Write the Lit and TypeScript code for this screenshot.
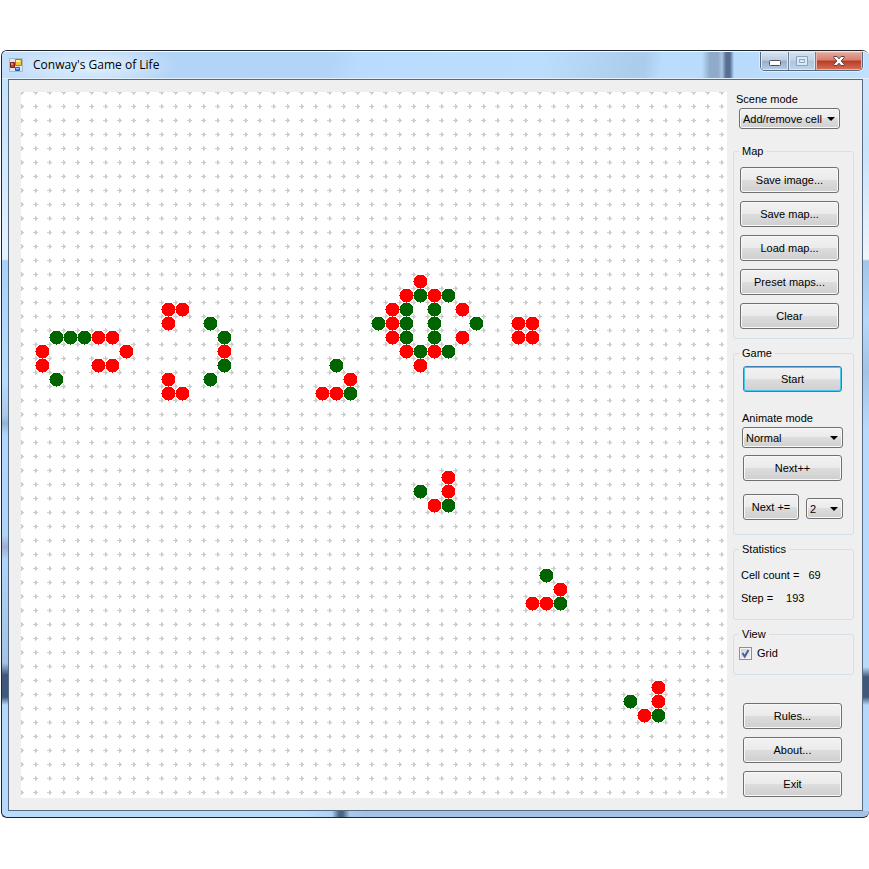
import { LitElement, html, css, svg } from "lit";
import { customElement, property, state } from "lit/decorators.js";

const CELL = 14;
const SIZE = 706;

// Live cells by row: [row, red columns, green columns]
const CELLS: [number, number[], number[]][] = [
  [13, [28], []],
  [14, [27, 29], [28, 30]],
  [15, [10, 11, 26, 31], [27, 29]],
  [16, [10, 26, 35, 36], [13, 25, 27, 29, 32]],
  [17, [5, 6, 26, 31, 35, 36], [2, 3, 4, 14, 27, 29]],
  [18, [1, 7, 14, 27, 29], [28, 30]],
  [19, [1, 5, 6, 28], [14, 22]],
  [20, [10, 23], [2, 13]],
  [21, [10, 11, 21, 22], [23]],
  [27, [30], []],
  [28, [30], [28]],
  [29, [29], [30]],
  [34, [], [37]],
  [35, [38], []],
  [36, [36, 37], [38]],
  [42, [45], []],
  [43, [45], [43]],
  [44, [44], [45]],
];

@customElement("life-board")
export class LifeBoard extends LitElement {
  @property({ type: Boolean }) grid = true;

  static styles = css`
    :host {
      display: block;
      flex: 1;
      min-width: 0;
      background: #fff;
    }
    .board {
      display: block;
      width: 100%;
    }
    .mark {
      fill: #cdcdcd;
      shape-rendering: crispEdges;
    }
    .born {
      fill: #f00;
      shape-rendering: crispEdges;
    }
    .old {
      fill: #006400;
      shape-rendering: crispEdges;
    }
  `;

  private cell(row: number, col: number, cls: string) {
    return svg`<circle class=${cls} cx=${CELL * col + 7.5} cy=${CELL * row + 7.5} r="7"></circle>`;
  }

  render() {
    return html`<svg class="board" viewBox="0 0 ${SIZE} ${SIZE}" role="img" aria-label="Cells">
      <defs>
        <pattern id="marks" x="-7" y="-7" width=${CELL} height=${CELL} patternUnits="userSpaceOnUse">
          <path class="mark" d="M5 7h5v1h-5zM7 5h1v5h-1zM8 6h1v3h-1z"></path>
        </pattern>
      </defs>
      ${this.grid ? svg`<rect width=${SIZE} height=${SIZE} fill="url(#marks)"></rect>` : null}
      ${CELLS.map(([row, red, green]) => [
        ...red.map((c) => this.cell(row, c, "born")),
        ...green.map((c) => this.cell(row, c, "old")),
      ])}
    </svg>`;
  }
}

@customElement("app-root")
export class AppRoot extends LitElement {
  @state() private grid = true;

  static styles = css`
    :host {
      display: block;
      min-height: 100vh;
      box-sizing: border-box;
      padding: 50px 0 50px 1px;
      background: #fff;
      color: #000;
      font: 11px/14px "Liberation Sans", Arial, sans-serif;
    }
    * {
      box-sizing: border-box;
    }
    .window {
      border: 1px solid #20242c;
      border-right: 0;
      border-radius: 6px 7px 6px 6px;
      padding: 0 6px 6px;
      background:
        linear-gradient(90deg, transparent, #4c6485 40%, #4c6485 60%, transparent) 330px 100% / 18px 6px no-repeat,
        linear-gradient(90deg, #b9dcfd 0, #b9dcfd 35%, #a3c3e6 42%, #a3c3e6) 0 100% / 100% 6px no-repeat,
        linear-gradient(#c4e0fb, #c9e3fb 60px, #e4f2fe 208px, #a9d1f8 210px, #b9dcfd 330px, #a9c9e6 364px, #93b3d3 372px, #b3d7fb 384px, #b0d4f8 484px, #a2acd0 496px, #b0d4f8 508px, #a3c3e6 612px, #40587a 624px, #40587a 646px, #b5d8fb 654px) 0 0 / 6px 100% no-repeat,
        linear-gradient(#cfe6fb, #c9e3fb 100px, #eef4fb 208px, #a3c6e8 210px, #b5d8fb 270px, #a3c3e6 320px, #b9dbfb 380px, #b9dbfb 616px, #40587a 626px, #40587a 646px, #b5d8fb 654px) 100% 0 / 6px 100% no-repeat,
        #b9dcfd;
    }
    .titlebar {
      display: flex;
      align-items: flex-start;
      height: 28px;
      margin: 0 -6px;
      padding: 0 6px 0 7px;
      border-top: 1px solid #f4faff;
      border-bottom: 1px solid #e2f1fd;
      border-radius: 5px 6px 0 0;
      background:
        radial-gradient(ellipse 90px 22px at 88px 14px, #e2f0fd, #e2f0fd00),
        linear-gradient(90deg, transparent 700px, #8fabc9 708px, #8fabc9 716px, #a9c6e4 720px, #566f92 724px, #566f92 728px, transparent 732px),
        linear-gradient(98deg, #c3defa 0, #b3d4f6 18%, #b1d4f7 38%, #b9dbfe 41%, #bcdefd 62%, #abcceb 73%, #abcceb 74%, #badcfd 76%, #b9dbfb 85%, #c0e0fd 100%);
    }
    .logo {
      flex: none;
      margin-top: 5px;
    }
    .title {
      flex: 1;
      margin: 0;
      padding: 4px 8px;
      font: 12px/18px "Open Sans", "Noto Sans", sans-serif;
    }
    .caption {
      display: flex;
      height: 19px;
      border: 1px solid #56687e;
      border-top: 0;
      border-radius: 0 0 5px 5px;
      overflow: hidden;
      box-shadow: 0 0 0 1px #ddeefb;
    }
    .cap {
      display: flex;
      align-items: center;
      justify-content: center;
      width: 28px;
      height: 18px;
      margin: 0;
      padding: 0;
      border: 0;
      border-right: 1px solid #6c7f95;
      background: linear-gradient(#d6e3f1 0, #bccde0 45%, #98afc9 50%, #b4cce6 100%);
      box-shadow: inset 0 0 0 1px #dbe8f5;
    }
    .min {
      padding-top: 4px;
    }
    .max {
      width: 27px;
      background: linear-gradient(#d0e1f2 0, #c0d4ea 45%, #adc5df 50%, #bcd5ef 100%);
    }
    .close {
      width: 46px;
      border-right: 0;
      background: linear-gradient(#e5a99c 0, #d5816f 45%, #b83a22 50%, #d8735a 100%);
      box-shadow: inset 0 0 0 1px #e8b5a8;
    }
    .client {
      display: flex;
      align-items: flex-start;
      padding: 12px 0 12px 12px;
      border: 1px solid #566a80;
      background: #efefef;
    }
    .side {
      flex: none;
      width: 135px;
      padding: 0 8px 0 6px;
    }
    .scene {
      display: block;
      padding-left: 3px;
    }
    .pick {
      position: relative;
      display: block;
      width: 101px;
      height: 21px;
      margin: 2px 0 0 -1px;
    }
    .pick::after {
      content: "";
      position: absolute;
      right: 5px;
      top: 9px;
      width: 8px;
      height: 4px;
      background: #000;
      clip-path: polygon(0 0, 100% 0, 50% 100%);
      pointer-events: none;
    }
    .pick.first {
      margin-left: 6px;
    }
    .pick.small {
      width: 37px;
      margin: 4px 0 0;
    }
    select,
    .btn {
      display: block;
      margin: 0;
      border: 1px solid #707070;
      border-radius: 3px;
      background: linear-gradient(#f2f2f2 0, #ebebeb 48%, #dddddd 50%, #cfcfcf 100%);
      box-shadow: inset 0 0 0 1px #f8f8f8;
      color: #000;
      font: inherit;
    }
    select {
      appearance: none;
      width: 100%;
      height: 21px;
      padding: 0 3px;
    }
    .btn {
      width: 99px;
      height: 26px;
      padding: 0;
    }
    .btn.start {
      border-color: #3c7fb1;
      box-shadow: inset 0 0 0 1px #48c8f0;
    }
    .btn.short {
      width: 56px;
    }
    fieldset {
      margin: 7px 0 0;
      padding: 0;
      border: 1px solid #d5dfe5;
      border-radius: 3px;
      min-width: 0;
    }
    legend {
      height: 14px;
      margin-left: 5px;
      padding: 0 3px;
    }
    .stack {
      display: flex;
      flex-direction: column;
      gap: 8px;
    }
    .map {
      margin-top: 15px;
    }
    .map .stack {
      padding: 9px 0 9px 6px;
    }
    .game {
      padding: 6px 0 14px 9px;
    }
    .animate {
      display: block;
      margin: 19px 0 0 -1px;
    }
    .next {
      margin-top: 7px;
    }
    .row {
      display: flex;
      gap: 7px;
      margin-top: 13px;
    }
    .stats {
      display: grid;
      gap: 9px;
      margin: 0;
      padding: 12px 0 14px 7px;
    }
    .stat {
      display: flex;
      gap: 9px;
    }
    .stat.step {
      gap: 13px;
    }
    .stat dd {
      margin: 0;
    }
    .view {
      display: flex;
      align-items: center;
      gap: 5px;
      padding: 5px 0 14px 5px;
    }
    .check {
      position: relative;
      display: flex;
      width: 13px;
      height: 13px;
    }
    .check input {
      appearance: none;
      width: 13px;
      height: 13px;
      margin: 0;
      border: 1px solid #8e8f8f;
      background: linear-gradient(135deg, #cbcfd5, #f6f6f6);
      box-shadow: inset 0 0 0 1px #f4f4f4;
    }
    .tick {
      position: absolute;
      inset: 0;
      pointer-events: none;
    }
    .check input:not(:checked) + .tick {
      display: none;
    }
    .foot {
      margin: 28px 0 0 10px;
    }
  `;

  private toggleGrid(e: Event) {
    this.grid = (e.target as HTMLInputElement).checked;
  }

  render() {
    return html`
      <main class="window">
        <header class="titlebar">
          <svg class="logo" width="16" height="16" viewBox="0 0 16 16" aria-hidden="true">
            <path d="M.5 1.500h13v13h-13z" fill="#dbe7f4" stroke="#a9b8c8"></path>
            <path d="M6.500 2.500h6v6h-6z" fill="#f6c63a" stroke="#a87b14"></path>
            <path d="M7 3h4v2h-4z" fill="#fdf0a8"></path>
            <path d="M1.500 5.500h4v5h-4z" fill="#c93a22" stroke="#8a1c10"></path>
            <path d="M2 6h2v2h-2z" fill="#e88a70"></path>
            <path d="M6.500 10.500h4v3h-4z" fill="#4a86e0" stroke="#2a58b0"></path>
            <path d="M7 11h3v1h-3z" fill="#a4c6f6"></path>
          </svg>
          <h1 class="title">Conway's Game of Life</h1>
          <div class="caption">
            <button class="cap min" aria-label="Minimize">
              <svg width="12" height="6" viewBox="0 0 12 6"><rect x="0.500" y="0.500" width="11" height="5" rx="1" fill="#fff" stroke="#4a5361"></rect></svg>
            </button>
            <button class="cap max" aria-label="Maximize">
              <svg width="12" height="10" viewBox="0 0 12 10"><path d="M.5 .5h11v9h-11zM3.500 3.500h5v3h-5z" fill="#dce8f4" stroke="#8fa3b8"></path></svg>
            </button>
            <button class="cap close" aria-label="Close">
              <svg width="12" height="10" viewBox="0 0 12 10"><path d="M.8.5h3.200l2 2.300 2-2.300h3.200v1.200l-3 3.300 3 3.300v1.200h-3.200l-2-2.300-2 2.300h-3.200v-1.200l3-3.300-3-3.300z" fill="#fff" stroke="#58404a"></path></svg>
            </button>
          </div>
        </header>
        <div class="client">
          <life-board ?grid=${this.grid}></life-board>
          <div class="side">
            <label class="scene" for="scene">Scene mode</label>
            <span class="pick first"><select id="scene"><option>Add/remove cell</option></select></span>
            <fieldset class="map">
              <legend>Map</legend>
              <div class="stack">
                ${["Save image...", "Save map...", "Load map...", "Preset maps...", "Clear"].map(
                  (t) => html`<button class="btn">${t}</button>`
                )}
              </div>
            </fieldset>
            <fieldset>
              <legend>Game</legend>
              <div class="game">
                <button class="btn start">Start</button>
                <label class="animate" for="animate">Animate mode</label>
                <span class="pick"><select id="animate"><option>Normal</option></select></span>
                <button class="btn next">Next++</button>
                <div class="row">
                  <button class="btn short">Next +=</button>
                  <span class="pick small"><select aria-label="Step size"><option>2</option></select></span>
                </div>
              </div>
            </fieldset>
            <fieldset>
              <legend>Statistics</legend>
              <dl class="stats">
                <div class="stat"><dt>Cell count =</dt><dd>69</dd></div>
                <div class="stat step"><dt>Step =</dt><dd>193</dd></div>
              </dl>
            </fieldset>
            <fieldset>
              <legend>View</legend>
              <div class="view">
                <span class="check">
                  <input id="grid" type="checkbox" .checked=${this.grid} @change=${this.toggleGrid} />
                  <svg class="tick" width="13" height="13" viewBox="0 0 13 13"><path d="M3.500 6l2.200 3.500L9.500 3" fill="none" stroke="#4b5f9c" stroke-width="2"></path></svg>
                </span>
                <label for="grid">Grid</label>
              </div>
            </fieldset>
            <div class="stack foot">
              ${["Rules...", "About...", "Exit"].map((t) => html`<button class="btn">${t}</button>`)}
            </div>
          </div>
        </div>
      </main>
    `;
  }
}
